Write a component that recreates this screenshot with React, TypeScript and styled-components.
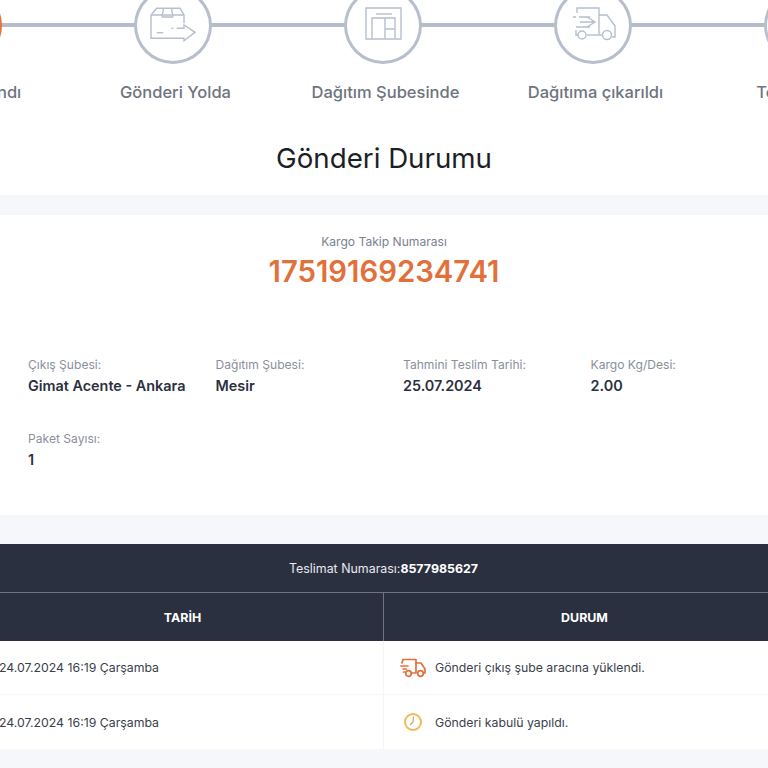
import React from "react";
import styled, { createGlobalStyle } from "styled-components";

const Global = createGlobalStyle`
  html, body { margin: 0; padding: 0; background: #f5f7fb; }
  body { width: 768px; height: 768px; overflow: hidden; font-family: Inter, "Noto Sans", "Liberation Sans", sans-serif; }
  * { box-sizing: border-box; }
`;

const Page = styled.div`
  width: 768px;
  height: 768px;
  overflow: hidden;
  display: flex;
  flex-direction: column;
`;
const Hero = styled.section`
  background: #fff;
  height: 195px;
  flex: none;
  display: flex;
  flex-direction: column;
  align-items: center;
  overflow: hidden;
`;
const Stepper = styled.div`
  display: grid;
  grid-template-columns: repeat(5, 210px);
  width: 1050px;
  margin: -13px 0 0 -2px;
  flex: none;
`;
const Step = styled.div`
  position: relative;
  display: flex;
  flex-direction: column;
  align-items: center;
  &::before {
    content: "";
    position: absolute;
    top: 36px;
    left: 0;
    right: 0;
    height: 4px;
    background: #b5bccb;
  }
`;
const Circle = styled.div<{ $active?: boolean }>`
  position: relative;
  width: 78px;
  height: 77px;
  border-radius: 50%;
  border: 3px solid ${(p) => (p.$active ? "#e8703a" : "#b7bfcc")};
  background: ${(p) => (p.$active ? "#e8703a" : "#fff")};
  display: flex;
  align-items: center;
  justify-content: center;
`;
const StepLabel = styled.div`
  margin: 18px 0 0 5px;
  font-size: 16.5px;
  line-height: 20px;
  font-weight: 500;
  color: #6e7480;
  white-space: nowrap;
`;
const Title = styled.h1`
  margin: 38px 0 0;
  font-size: 27.7px;
  line-height: 36px;
  font-weight: 400;
  color: #1c1f26;
`;
const Card = styled.section`
  margin-top: 20px;
  background: #fff;
  height: 300px;
  flex: none;
  padding-top: 19px;
  display: flex;
  flex-direction: column;
`;
const TrackLabel = styled.div`
  text-align: center;
  font-size: 12.1px;
  line-height: 16px;
  color: #7b8190;
`;
const TrackNumber = styled.div`
  text-align: center;
  font-size: 29.3px;
  line-height: 36px;
  margin-top: 4px;
  font-weight: 600;
  color: #e2703a;
`;
const InfoGrid = styled.div`
  display: grid;
  grid-template-columns: repeat(4, 187.5px);
  row-gap: 34px;
  padding: 0 0 0 28px;
  margin-top: 67px;
`;
const InfoItem = styled.div`
  display: flex;
  flex-direction: column;
  gap: 2px;
`;
const InfoLabel = styled.div`
  font-size: 12.1px;
  line-height: 16px;
  color: #8a8f9b;
  white-space: nowrap;
`;
const InfoValue = styled.div`
  font-size: 14.4px;
  line-height: 22px;
  font-weight: 600;
  color: #2a3040;
  white-space: nowrap;
`;
const Table = styled.section`
  margin-top: 29px;
  margin-left: -18px;
  width: 803px;
  flex: none;
`;
const TableCaption = styled.div`
  height: 49px;
  background: #2b3040;
  border-bottom: 1px solid #6f7480;
  color: #e8eaf0;
  font-size: 12.4px;
  display: flex;
  align-items: center;
  justify-content: center;
  b { font-weight: 700; color: #fff; }
`;
const Row = styled.div`
  display: grid;
  grid-template-columns: 402px 401px;
`;
const HeadCell = styled.div<{ $divider?: boolean }>`
  height: 48px;
  background: #2b3040;
  color: #fff;
  font-size: 12.4px;
  font-weight: 700;
  display: flex;
  align-items: center;
  justify-content: center;
  ${(p) => (p.$divider ? "border-right: 1px solid #6f7480;" : "")}
`;
const BodyRow = styled(Row)<{ $gap?: boolean }>`
  background: #fff;
  height: 54px;
  ${(p) => (p.$gap ? "border-bottom: 1px solid #f6f7fa;" : "")}
`;
const DateCell = styled.div`
  padding-left: 17px;
  font-size: 12.3px;
  color: #3a3f4c;
  display: flex;
  align-items: center;
  border-right: 1px solid #f4f5f8;
`;
const StatusCell = styled.div`
  padding-left: 16px;
  font-size: 12.3px;
  color: #3a3f4c;
  display: flex;
  align-items: center;
  gap: 9px;
`;
const IconSlot = styled.span`
  width: 26px;
  height: 22px;
  flex: none;
  display: flex;
  align-items: center;
  justify-content: center;
`;

const Stroke = { fill: "none", stroke: "#b7bfcc", strokeWidth: 1.4 } as const;

const BoxIcon = () => (
  <svg width="46" height="36" viewBox="0 0 46 36" {...Stroke} style={{ marginTop: -3 }}>
    <path d="M1 9 L6.7 2.3 H30 L34 9 V17.3" />
    <path d="M1 9 H34" />
    <path d="M1 9 V32.3 H34 V34.7 L45 26.3 L34 19 V22.3 H26.7" />
    <path d="M13.5 2.3 L12.3 9 V11 H22.7 V9 L21.5 2.3" />
    <path d="M6.7 26.7 H13.3" />
    <path d="M21.5 22.3 H23.5" />
  </svg>
);
const DoorIcon = () => (
  <svg width="37" height="33" viewBox="0 0 37 33" {...Stroke} style={{ marginTop: -4 }}>
    <path d="M1 1 H36 V32 H1 Z" />
    <path d="M11 7 H27" />
    <path d="M7 32 V11 H30 V32" />
    <path d="M20 11 V32 M20 22 H30" />
  </svg>
);
const TruckIcon = () => (
  <svg width="48" height="36" viewBox="0 0 48 36" {...Stroke} style={{ marginTop: -3 }}>
    <path d="M8 7 V2 H30 V29" />
    <path d="M30 9 H38 L46 20 V31 H43" />
    <path d="M18 29 H33" />
    <path d="M7 24 V29 H9" />
    <path d="M4 11 H7 M10 11 H21 M11 16 H26 M7 21 H21 M18 11 L26 16 L18 21" />
    <circle cx="13" cy="29" r="4" />
    <circle cx="38" cy="29" r="4.5" />
  </svg>
);
const OrangeTruck = () => (
  <svg width="26" height="20" viewBox="0 0 26 20" fill="none" stroke="#e2703a" strokeWidth="1.7" strokeLinecap="round" strokeLinejoin="round">
    <path d="M2 5 L3 1.5 H16 V15 H11.5" />
    <path d="M16 5 H21 L25 11 V15 H23.5" />
    <path d="M0.8 8 H8 M3 11 H6.5 M3.5 14 H4.5" />
    <circle cx="8.5" cy="15.5" r="2.8" />
    <circle cx="20.5" cy="15.5" r="2.8" />
  </svg>
);
const Clock = () => (
  <svg width="20" height="20" viewBox="0 0 20 20" fill="none" strokeLinecap="round">
    <circle cx="10" cy="10" r="8" stroke="#f0bb55" strokeWidth="2" />
    <path d="M10.5 5 L10 10 L7.5 12.5" strokeWidth="1.2" stroke="#c9a35a" />
  </svg>
);

const info = [
  ["Çıkış Şubesi:", "Gimat Acente - Ankara"],
  ["Dağıtım Şubesi:", "Mesir"],
  ["Tahmini Teslim Tarihi:", "25.07.2024"],
  ["Kargo Kg/Desi:", "2.00"],
  ["Paket Sayısı:", "1"],
];

export default function App() {
  return (
    <Page>
      <Global />
      <Hero>
        <Stepper>
          <Step><Circle $active /><StepLabel>Gönderi Alındı</StepLabel></Step>
          <Step><Circle><BoxIcon /></Circle><StepLabel>Gönderi Yolda</StepLabel></Step>
          <Step><Circle><DoorIcon /></Circle><StepLabel>Dağıtım Şubesinde</StepLabel></Step>
          <Step><Circle><TruckIcon /></Circle><StepLabel>Dağıtıma çıkarıldı</StepLabel></Step>
          <Step><Circle /><StepLabel>Teslim Edildi</StepLabel></Step>
        </Stepper>
        <Title>Gönderi Durumu</Title>
      </Hero>
      <Card>
        <TrackLabel>Kargo Takip Numarası</TrackLabel>
        <TrackNumber>17519169234741</TrackNumber>
        <InfoGrid>
          {info.map(([l, v]) => (
            <InfoItem key={l}>
              <InfoLabel>{l}</InfoLabel>
              <InfoValue>{v}</InfoValue>
            </InfoItem>
          ))}
        </InfoGrid>
      </Card>
      <Table>
        <TableCaption>Teslimat Numarası:<b>8577985627</b></TableCaption>
        <Row>
          <HeadCell $divider>TARİH</HeadCell>
          <HeadCell>DURUM</HeadCell>
        </Row>
        <BodyRow $gap>
          <DateCell>24.07.2024 16:19 Çarşamba</DateCell>
          <StatusCell><IconSlot><OrangeTruck /></IconSlot>Gönderi çıkış şube aracına yüklendi.</StatusCell>
        </BodyRow>
        <BodyRow>
          <DateCell>24.07.2024 16:19 Çarşamba</DateCell>
          <StatusCell><IconSlot><Clock /></IconSlot>Gönderi kabulü yapıldı.</StatusCell>
        </BodyRow>
      </Table>
    </Page>
  );
}
